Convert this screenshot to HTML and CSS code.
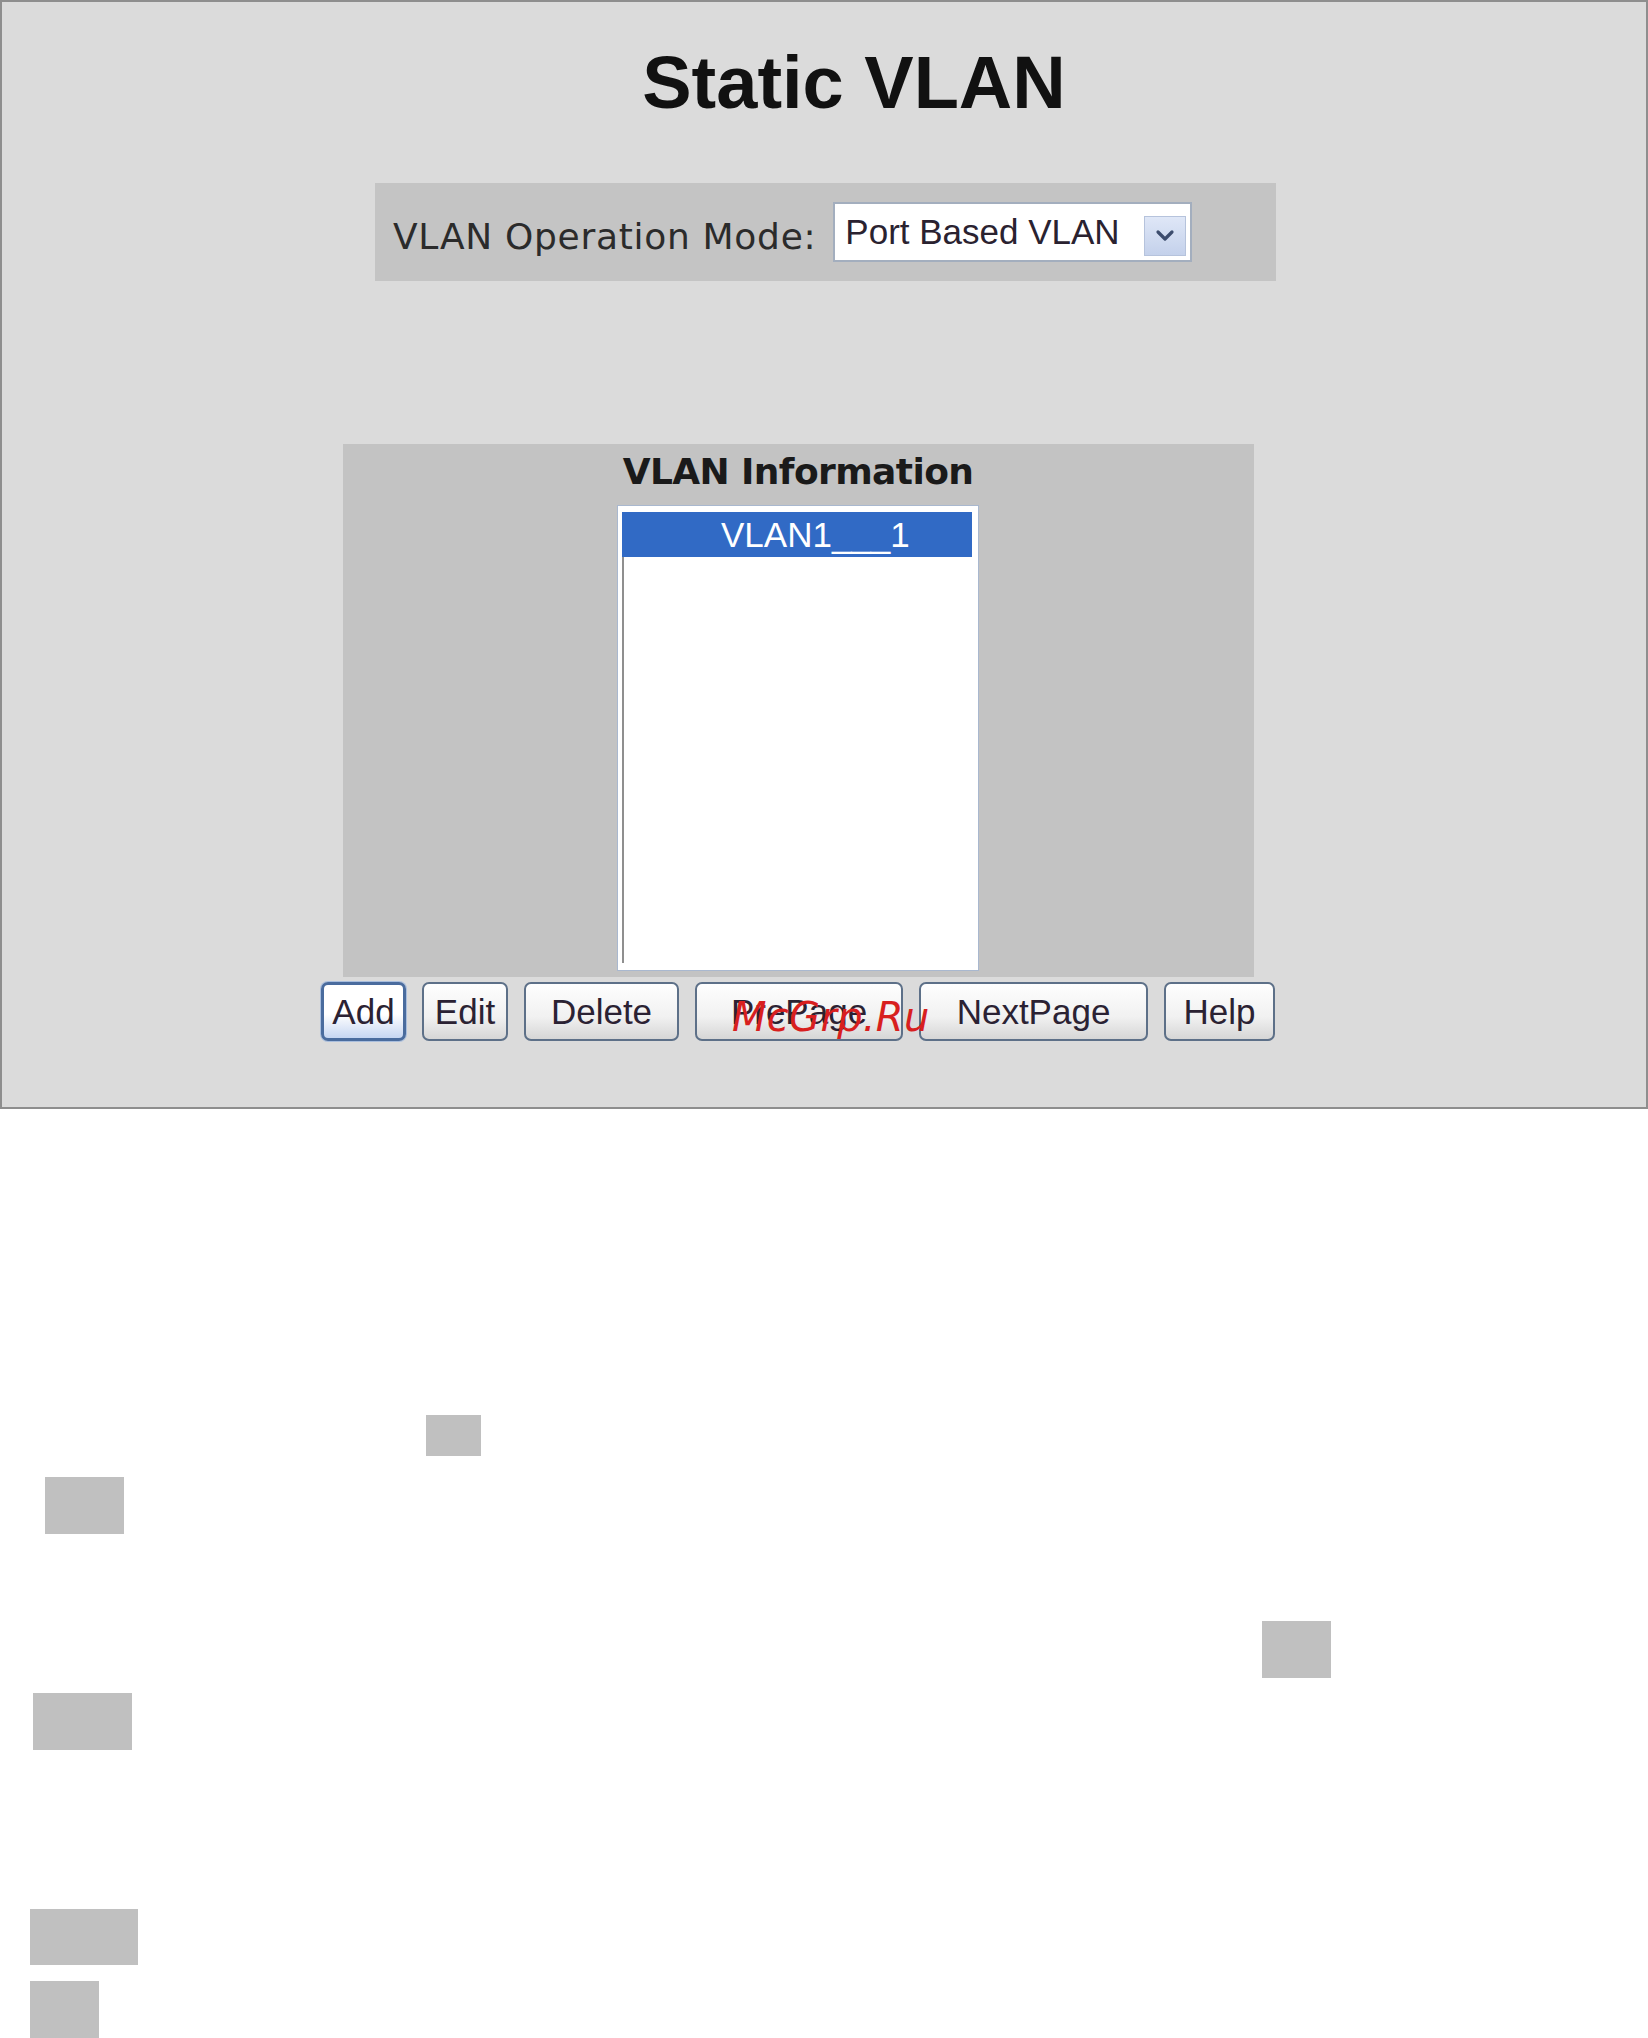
FILE: index.html
```html
<!DOCTYPE html>
<html lang="en">
<head>
<meta charset="utf-8">
<title>Static VLAN</title>
<link rel="stylesheet" href="styles.css">
</head>
<body>
<div class="frame">
  <h1 class="title">Static VLAN</h1>

  <div class="modebar">
    <span class="mode-label">VLAN Operation Mode:</span>
    <div class="select">
      <span class="select-text">Port Based VLAN</span>
      <span class="select-arrow">
        <svg width="20" height="14" viewBox="0 0 20 14"><path d="M3 3 L10 10 L17 3" fill="none" stroke="#3d4d6e" stroke-width="3.2" stroke-linecap="round" stroke-linejoin="round"/></svg>
      </span>
    </div>
  </div>

  <div class="info-wrap">
    <div class="info-panel">
      <div class="info-heading">VLAN Information</div>
      <div class="listbox">
        <div class="list">
          <div class="option selected">VLAN1___1</div>
        </div>
      </div>
    </div>
    <div class="btn-row">
      <button class="btn btn-add">Add</button>
      <button class="btn btn-edit">Edit</button>
      <button class="btn btn-delete">Delete</button>
      <button class="btn btn-prev">PrePage</button>
      <button class="btn btn-next">NextPage</button>
      <button class="btn btn-help">Help</button>
    </div>
  </div>

  <span class="watermark">McGrp.Ru</span>
</div>

<div class="doc">
  <div class="blk b1"></div>
  <div class="blk b2"></div>
  <div class="blk b3"></div>
  <div class="blk b4"></div>
  <div class="blk b5"></div>
  <div class="blk b6"></div>
</div>
</body>
</html>
```

FILE: styles.css
```css
html, body {
  margin: 0;
  padding: 0;
  background: #ffffff;
}

body {
  width: 1648px;
  font-family: "Liberation Sans", Arial, sans-serif;
}

.frame {
  position: relative;
  box-sizing: border-box;
  width: 1648px;
  height: 1109px;
  border: 2px solid #8e8e8e;
  background: #dbdbdb;
  padding-top: 44px;
}

.title {
  margin: 0;
  padding-left: 60px;
  text-align: center;
  font-family: "Liberation Sans", Arial, sans-serif;
  font-weight: bold;
  font-size: 74px;
  line-height: 74px;
  color: #111111;
}

.modebar {
  margin-top: 63px;
  margin-left: 373px;
  width: 901px;
  height: 98px;
  box-sizing: border-box;
  background: #c4c4c4;
  display: flex;
  align-items: center;
  padding-left: 18px;
}

.mode-label {
  font-family: "DejaVu Sans", Verdana, sans-serif;
  font-size: 36px;
  letter-spacing: 0.7px;
  color: #2b2b2b;
  padding-top: 8px;
  white-space: nowrap;
}

.select {
  margin-left: 17px;
  width: 359px;
  height: 60px;
  box-sizing: border-box;
  border: 2px solid #a3aebe;
  background: #ffffff;
  display: flex;
  align-items: center;
  padding-left: 10px;
}

.select-text {
  font-family: "Liberation Sans", Arial, sans-serif;
  font-size: 35px;
  color: #2a2230;
  white-space: nowrap;
}

.select-arrow {
  margin-left: auto;
  margin-right: 4px;
  align-self: flex-end;
  margin-bottom: 4px;
  width: 42px;
  height: 40px;
  box-sizing: border-box;
  border: 1px solid #b6c3dc;
  background: linear-gradient(#dfe7f7, #c4d1eb);
  display: flex;
  align-items: center;
  justify-content: center;
}

.info-wrap {
  margin-top: 163px;
  margin-left: 318px;
  width: 956px;
  display: flex;
  flex-direction: column;
  align-items: center;
}

.info-panel {
  width: 911px;
  box-sizing: border-box;
  background: #c3c3c3;
  padding: 7px 0 6px;
  display: flex;
  flex-direction: column;
  align-items: center;
}

.info-heading {
  font-family: "DejaVu Sans", Verdana, sans-serif;
  font-weight: bold;
  font-size: 36px;
  line-height: 42px;
  letter-spacing: -0.6px;
  color: #1a1a1a;
  text-align: center;
}

.listbox {
  margin-top: 12px;
  width: 362px;
  height: 466px;
  box-sizing: border-box;
  border: 1px solid #a9b8cf;
  background: #ffffff;
  padding: 6px 6px 7px 4px;
}

.list {
  height: 100%;
  border-left: 2px solid #8f8f8f;
}

.option {
  margin-left: -2px;
  height: 45px;
  line-height: 45px;
  padding-left: 99px;
  font-family: "Liberation Sans", Arial, sans-serif;
  font-size: 35px;
  white-space: nowrap;
}

.option.selected {
  background: #316ac5;
  color: #ffffff;
}

.btn-row {
  margin-top: 5px;
  display: flex;
  justify-content: center;
  gap: 16px;
}

.btn {
  box-sizing: border-box;
  height: 59px;
  padding: 0;
  margin: 0;
  border: 2px solid #5d7088;
  border-radius: 7px;
  background: linear-gradient(#fefefe, #f1f1f1 60%, #d6d6d6);
  font-family: "Liberation Sans", Arial, sans-serif;
  font-size: 35px;
  color: #2b2233;
  display: flex;
  align-items: center;
  justify-content: center;
}

.btn-add {
  width: 85px;
  border: 3px solid #4a6c9e;
  background: linear-gradient(#ffffff 55%, #c6d6f2);
  box-shadow: 0 0 0 1px #a9bedd;
}

.btn-edit { width: 86px; }
.btn-delete { width: 155px; }
.btn-prev { width: 208px; }
.btn-next { width: 229px; }
.btn-help { width: 111px; }

.watermark {
  position: absolute;
  left: 730px;
  top: 995px;
  font-family: "DejaVu Sans", Verdana, sans-serif;
  font-style: italic;
  font-size: 40px;
  line-height: 40px;
  letter-spacing: 0.3px;
  color: #d81f1f;
  white-space: nowrap;
}

.doc {
  display: flow-root;
}

.blk {
  background: #c0c0c0;
}

.b1 { margin-top: 306px; margin-left: 426px; width: 55px; height: 41px; }
.b2 { margin-top: 21px; margin-left: 45px; width: 79px; height: 57px; }
.b3 { margin-top: 87px; margin-left: 1262px; width: 69px; height: 57px; }
.b4 { margin-top: 15px; margin-left: 33px; width: 99px; height: 57px; }
.b5 { margin-top: 159px; margin-left: 30px; width: 108px; height: 56px; }
.b6 { margin-top: 16px; margin-left: 30px; width: 69px; height: 57px; }
```
